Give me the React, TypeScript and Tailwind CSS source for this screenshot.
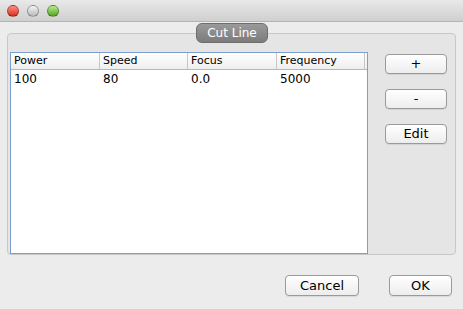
import React from "react";

const cols = ["Power", "Speed", "Focus", "Frequency"];
const widths = ["w-[89px]", "w-[88px]", "w-[89px]", "w-[88px]"];
const rows = [["100", "80", "0.0", "5000"]];

function Light({ color }: { color: string }) {
  return (
    <div
      className={`w-[12px] h-[12px] rounded-full border border-black/30 ${color}`}
    />
  );
}

function MacButton({
  label,
  className,
}: {
  label: string;
  className: string;
}) {
  return (
    <button
      className={`flex items-center justify-center rounded-[4px] border border-[#9a9a9a] bg-gradient-to-b from-white to-[#ededed] text-[13px] text-black shadow-[0_1px_0_rgba(0,0,0,0.08)] ${className}`}
    >
      {label}
    </button>
  );
}

export default function App() {
  return (
    <div
      className="w-[463px] h-[309px] bg-[#ececec] flex flex-col overflow-hidden"
      style={{ fontFamily: '"Lucida Grande", "DejaVu Sans", sans-serif' }}
    >
      {/* title bar */}
      <div className="h-[22px] flex items-center gap-[8px] pl-[7px] bg-gradient-to-b from-[#e9e9e9] to-[#cfcfcf] border-b border-[#b4b4b4]">
        <Light color="bg-gradient-to-b from-[#ff8c80] to-[#d8261b]" />
        <Light color="bg-gradient-to-b from-[#f4f4f4] to-[#b9b9b9]" />
        <Light color="bg-gradient-to-b from-[#b8ec86] to-[#53a61e]" />
      </div>

      {/* group box */}
      <div className="relative ml-[7px] mt-[11px] w-[449px] h-[222px] rounded-[4px] border border-[#c8c8c8] bg-[#e5e5e5] flex pl-[2px] pt-[18px] pb-[1px]">
        <div className="absolute left-[188px] top-[-11px] w-[72px] h-[20px] rounded-[6px] border border-[#6d6d6d] bg-gradient-to-b from-[#9a9a9a] to-[#7c7c7c] text-white text-[12px] flex items-center justify-center">
          Cut Line
        </div>

        {/* table */}
        <div className="w-[358px] h-[202px] bg-white border border-[#7b9fcf] flex flex-col">
          <div className="h-[17px] flex border-b border-[#b7b7b7] bg-gradient-to-b from-white to-[#eeeeee]">
            {cols.map((c, i) => (
              <div
                key={c}
                className={`${widths[i]} h-full flex items-center pl-[3px] text-[11px] text-black border-r border-[#c7c7c7]`}
              >
                {c}
              </div>
            ))}
          </div>
          {rows.map((r, ri) => (
            <div key={ri} className="h-[18px] flex">
              {r.map((v, i) => (
                <div
                  key={i}
                  className={`${widths[i]} flex items-center pl-[3px] text-[12px] text-black`}
                >
                  {v}
                </div>
              ))}
            </div>
          ))}
        </div>

        {/* side buttons */}
        <div className="ml-[17px] flex flex-col gap-[15px] pt-[2px]">
          <MacButton label="+" className="w-[62px] h-[20px]" />
          <MacButton label="-" className="w-[62px] h-[20px]" />
          <MacButton label="Edit" className="w-[62px] h-[20px]" />
        </div>
      </div>

      {/* footer */}
      <div className="flex justify-end gap-[30px] pr-[11px] mt-[20px]">
        <MacButton label="Cancel" className="w-[74px] h-[21px]" />
        <MacButton label="OK" className="w-[63px] h-[21px]" />
      </div>
    </div>
  );
}
